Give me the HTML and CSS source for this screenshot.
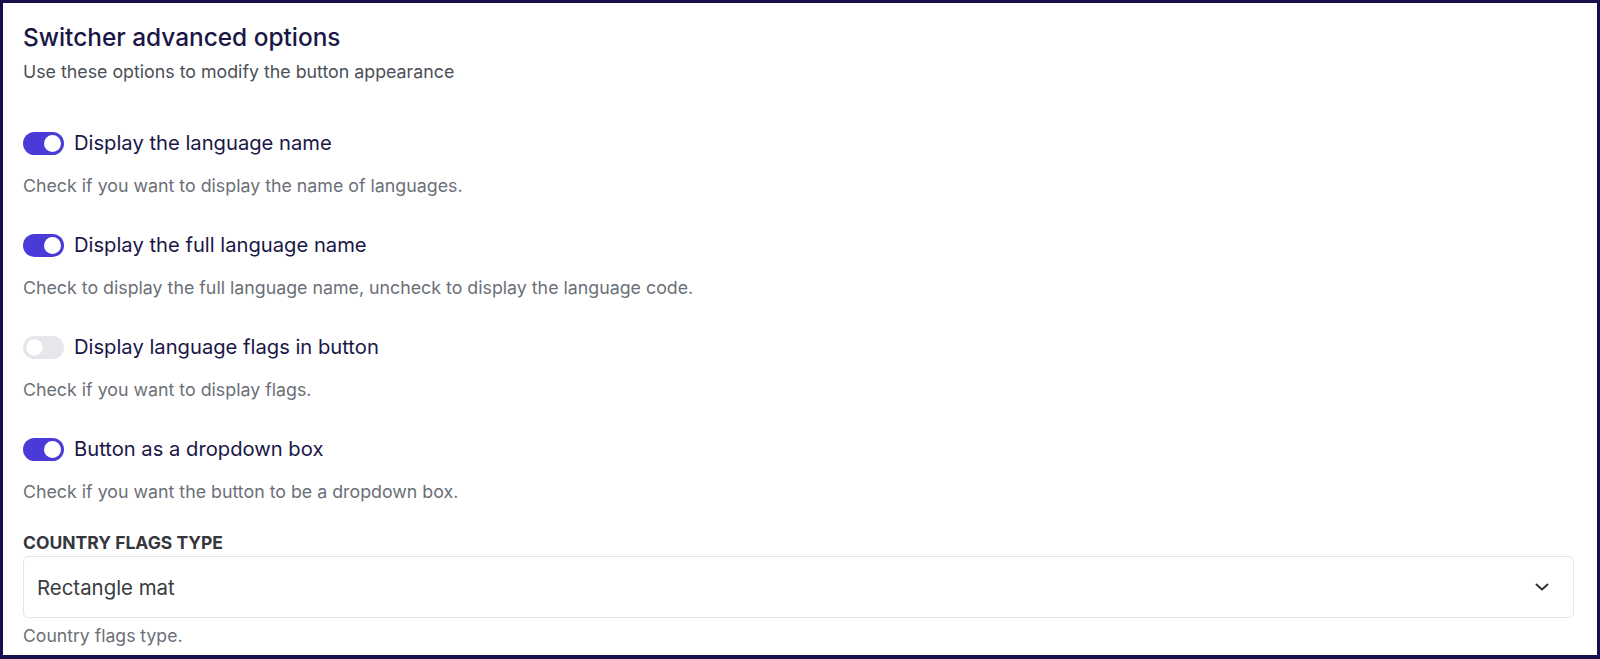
FILE: index.html
```html
<!DOCTYPE html>
<html lang="en">
<head>
<meta charset="utf-8">
<title>Switcher advanced options</title>
<link rel="stylesheet" href="styles.css">
</head>
<body>
<div class="frame">
  <h2 class="title">Switcher advanced options</h2>
  <p class="subtitle">Use these options to modify the button appearance</p>

  <div class="option">
    <div class="option-row">
      <span class="toggle on"><span class="knob"></span></span>
      <span class="option-label">Display the language name</span>
    </div>
    <p class="option-desc">Check if you want to display the name of languages.</p>
  </div>

  <div class="option">
    <div class="option-row">
      <span class="toggle on"><span class="knob"></span></span>
      <span class="option-label">Display the full language name</span>
    </div>
    <p class="option-desc">Check to display the full language name, uncheck to display the language code.</p>
  </div>

  <div class="option">
    <div class="option-row">
      <span class="toggle"><span class="knob"></span></span>
      <span class="option-label">Display language flags in button</span>
    </div>
    <p class="option-desc">Check if you want to display flags.</p>
  </div>

  <div class="option last">
    <div class="option-row">
      <span class="toggle on"><span class="knob"></span></span>
      <span class="option-label">Button as a dropdown box</span>
    </div>
    <p class="option-desc">Check if you want the button to be a dropdown box.</p>
  </div>

  <div class="field">
    <div class="field-label">COUNTRY FLAGS TYPE</div>
    <div class="select">
      <span class="select-value">Rectangle mat</span>
      <svg class="chevron" width="14" height="8" viewBox="0 0 14 8" aria-hidden="true">
        <path d="M1.5 1.5 L7 6.5 L12.5 1.5" fill="none" stroke="#2d2f36" stroke-width="1.9" stroke-linecap="round" stroke-linejoin="round"/>
      </svg>
    </div>
    <p class="field-help">Country flags type.</p>
  </div>
</div>
</body>
</html>
```

FILE: styles.css
```css
* { box-sizing: border-box; }

html, body {
  margin: 0;
  padding: 0;
  background: #16104d;
}

body {
  font-family: Inter, "Noto Sans", "Liberation Sans", sans-serif;
}

.frame {
  height: 100vh;
  overflow: hidden;
  background: #ffffff;
  border: 3px solid #16104d;
  border-bottom-width: 4px;
  padding: 20px 23px 0 20px;
}

.title {
  margin: 0;
  font-size: 24.4px;
  line-height: 28px;
  font-weight: 500;
  color: #1a1747;
}

.subtitle {
  margin: 9px 0 0;
  font-size: 17.8px;
  line-height: 24px;
  color: #4b4f58;
}

.subtitle + .option { margin-top: 47px; }

.option { margin-bottom: 35px; }

.option.last { margin-bottom: 29px; }

.option-row {
  display: flex;
  align-items: center;
  gap: 10px;
  height: 24px;
}

.toggle {
  position: relative;
  flex: none;
  width: 41px;
  height: 23px;
  border-radius: 12px;
  background: #e6e7eb;
}

.toggle .knob {
  position: absolute;
  top: 3px;
  left: 3px;
  width: 17px;
  height: 17px;
  border-radius: 50%;
  background: #ffffff;
  box-shadow: 0 0 1px rgba(0,0,0,0.15);
}

.toggle.on { background: #4a3bd8; }

.toggle.on .knob {
  left: 21px;
  box-shadow: none;
}

.option-label {
  font-size: 20.2px;
  line-height: 24px;
  color: #1a1747;
}

.option-desc {
  margin: 19px 0 0;
  font-size: 17.8px;
  line-height: 24px;
  color: #6b6f78;
}

.field-label {
  font-size: 17.5px;
  line-height: 20px;
  font-weight: 700;
  color: #35373d;
}

.select {
  margin-top: 3px;
  height: 62px;
  border: 1px solid #e3e5e9;
  border-radius: 5px;
  display: flex;
  align-items: center;
  justify-content: space-between;
  padding: 0 24px 0 13px;
}

.select-value {
  font-size: 20.4px;
  color: #3a3c42;
}

.chevron { display: block; }

.field-help {
  margin: 6px 0 0;
  font-size: 17.6px;
  line-height: 24px;
  color: #6b6f78;
}
```
